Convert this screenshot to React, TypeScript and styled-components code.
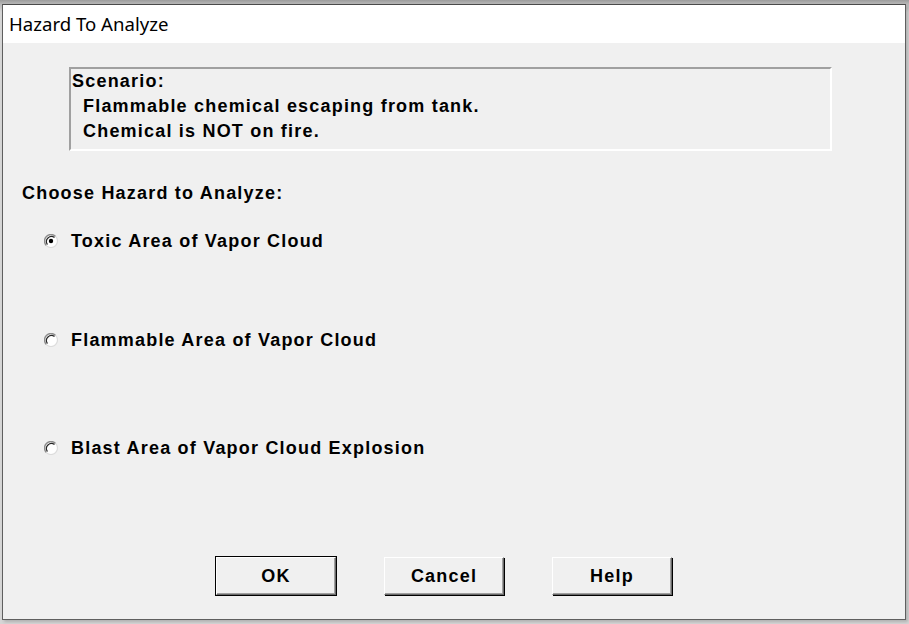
import styled, { createGlobalStyle } from 'styled-components';

const GlobalStyle = createGlobalStyle`
    html, body {
        margin: 0;
        padding: 0;
        background: #d6d6d6;
    }
    body {
        width: 909px;
        height: 624px;
        overflow: hidden;
        background: linear-gradient(to bottom, #9c9c9c 0px, #b8b8b8 4px, #d6d6d6 12px);
    }
`;

const Frame = styled.div`
    margin: 4px 0 0 2px;
    width: 902px;
    height: 614px;
    border: 1px solid #5f5f5f;
    border-top-color: #4a4a4a;
    background: #f0f0f0;
    display: flex;
    flex-direction: column;
    box-shadow: 2px 2px 3px rgba(0, 0, 0, 0.18);
`;

const TitleBar = styled.div`
    height: 38px;
    background: #ffffff;
    display: flex;
    align-items: center;
    padding-left: 6px;
    font-family: "Noto Sans", "Liberation Sans", sans-serif;
    font-size: 18.6px;
    color: #000;
    padding-bottom: 1px;
    box-sizing: border-box;
`;

const Body = styled.div`
    flex: 1;
    display: flex;
    flex-direction: column;
    padding: 24px 0 0 0;
    font-family: "Liberation Sans", Arial, sans-serif;
    font-weight: bold;
    font-size: 18px;
    letter-spacing: 1.2px;
    color: #000;
`;

const ScenarioBox = styled.div`
    margin-left: 66px;
    width: 758px;
    height: 80px;
    border: 2px solid #ffffff;
    border-top-color: #a0a0a0;
    border-left-color: #a0a0a0;
    padding: 0 0 0 1px;
    line-height: 25px;
`;

const Line = styled.div<{ $indent?: boolean }>`
    padding-left: ${(p) => (p.$indent ? '11px' : '0')};
    white-space: nowrap;
`;

const Prompt = styled.div`
    margin: 32px 0 0 19px;
    line-height: 20px;
`;

const RadioRow = styled.div<{ $top: number }>`
    display: flex;
    align-items: center;
    margin: ${(p) => p.$top}px 0 0 41px;
    height: 20px;
    gap: 13px;
`;

const ButtonRow = styled.div`
    margin-top: auto;
    margin-bottom: 24px;
    padding-left: 213px;
    display: flex;
    gap: 48px;
`;

const Button = styled.button<{ $default?: boolean }>`
    width: 120px;
    height: 38px;
    padding: 0;
    background: #f0f0f0;
    font-family: "Liberation Sans", Arial, sans-serif;
    font-weight: bold;
    font-size: 18px;
    letter-spacing: 1.2px;
    color: #000;
    border: 1px solid;
    border-color: #ffffff #696969 #696969 #ffffff;
    box-shadow: ${(p) =>
        p.$default
            ? 'inset -1px -1px 0 #a0a0a0, 0 0 0 1px #000'
            : 'inset -1px -1px 0 #a0a0a0, 1px 1px 0 #000'};
    cursor: default;
`;

function Radio({ checked }: { checked?: boolean }) {
    return (
        <svg width="14" height="14" viewBox="0 0 14 14">
            <circle cx="7" cy="7" r="6.5" fill="#ffffff" />
            <path d="M11.6 2.4 A6.5 6.5 0 0 0 2.4 11.6" stroke="#8c8c8c" strokeWidth="1.4" fill="none" />
            <path d="M10.5 3.5 A5 5 0 0 0 3.5 10.5" stroke="#262626" strokeWidth="1.2" fill="none" />
            <path d="M2.4 11.6 A6.5 6.5 0 0 0 11.6 2.4" stroke="#dcdcdc" strokeWidth="1.2" fill="none" />
            {checked && <circle cx="7" cy="7" r="2.2" fill="#000" />}
        </svg>
    );
}

export default function App() {
    return (
        <>
            <GlobalStyle />
            <Frame>
                <TitleBar>Hazard To Analyze</TitleBar>
                <Body>
                    <ScenarioBox>
                        <Line>Scenario:</Line>
                        <Line $indent>Flammable chemical escaping from tank.</Line>
                        <Line $indent>Chemical is NOT on fire.</Line>
                    </ScenarioBox>
                    <Prompt>Choose Hazard to Analyze:</Prompt>
                    <RadioRow $top={28}>
                        <Radio checked />
                        <span>Toxic Area of Vapor Cloud</span>
                    </RadioRow>
                    <RadioRow $top={79}>
                        <Radio />
                        <span>Flammable Area of Vapor Cloud</span>
                    </RadioRow>
                    <RadioRow $top={88}>
                        <Radio />
                        <span>Blast Area of Vapor Cloud Explosion</span>
                    </RadioRow>
                    <ButtonRow>
                        <Button $default>OK</Button>
                        <Button>Cancel</Button>
                        <Button>Help</Button>
                    </ButtonRow>
                </Body>
            </Frame>
        </>
    );
}
